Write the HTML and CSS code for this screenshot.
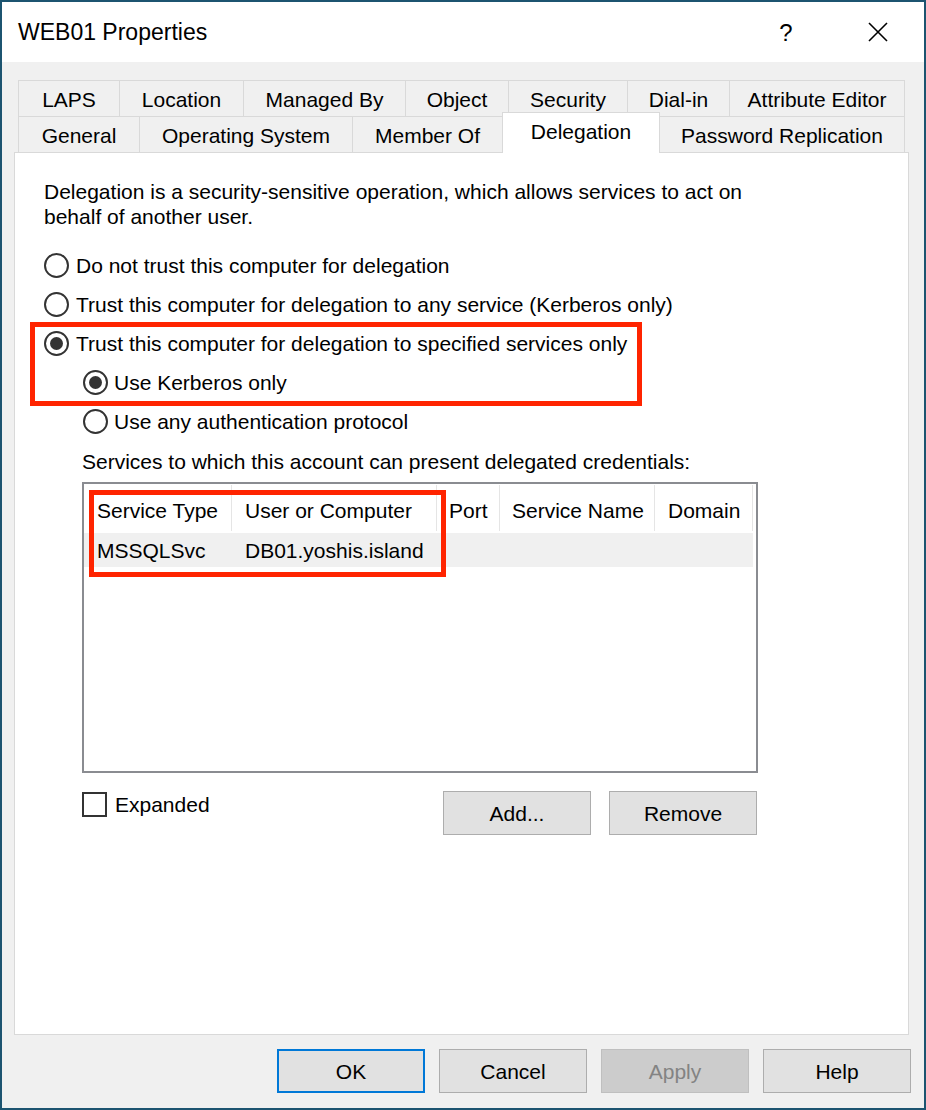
FILE: index.html
```html
<!DOCTYPE html>
<html>
<head>
<meta charset="utf-8">
<title>WEB01 Properties</title>
<link rel="stylesheet" href="styles.css">
</head>
<body>
<div class="window">
  <div class="titlebar">
    <span class="title">WEB01 Properties</span>
    <span class="help">?</span>
    <svg class="close" viewBox="0 0 20 20"><path d="M1 1 L19 19 M19 1 L1 19" stroke="#000" stroke-width="1.6" fill="none"/></svg>
  </div>
  <div class="body">
    <div class="tabs">
      <div class="tabrow back">
        <div class="tab t-laps">LAPS</div>
        <div class="tab t-location">Location</div>
        <div class="tab t-managed">Managed By</div>
        <div class="tab t-object">Object</div>
        <div class="tab t-security">Security</div>
        <div class="tab t-dialin">Dial-in</div>
        <div class="tab t-attr">Attribute Editor</div>
      </div>
      <div class="tabrow front">
        <div class="tab t-general">General</div>
        <div class="tab t-os">Operating System</div>
        <div class="tab t-member">Member Of</div>
        <div class="tab t-deleg active">Delegation</div>
        <div class="tab t-pwd">Password Replication</div>
      </div>
    </div>
    <div class="panel">
      <p class="intro">Delegation is a security-sensitive operation, which allows services to act on<br>behalf of another user.</p>
      <div class="options">
        <div class="radio"><span class="rb"></span><span>Do not trust this computer for delegation</span></div>
        <div class="radio"><span class="rb"></span><span>Trust this computer for delegation to any service (Kerberos only)</span></div>
        <div class="radio"><span class="rb checked"></span><span>Trust this computer for delegation to specified services only</span></div>
        <div class="radio sub"><span class="rb checked"></span><span>Use Kerberos only</span></div>
        <div class="radio sub"><span class="rb"></span><span>Use any authentication protocol</span></div>
      </div>
      <div class="caption">Services to which this account can present delegated credentials:</div>
      <div class="listview">
        <div class="lv-header">
          <div class="cell c-type">Service Type</div>
          <div class="cell c-user">User or Computer</div>
          <div class="cell c-port">Port</div>
          <div class="cell c-name">Service Name</div>
          <div class="cell c-domain">Domain</div>
        </div>
        <div class="lv-row">
          <div class="cell c-type">MSSQLSvc</div>
          <div class="cell c-user">DB01.yoshis.island</div>
          <div class="cell c-port"></div>
          <div class="cell c-name"></div>
          <div class="cell c-domain"></div>
        </div>
        <div class="hl hl-table"></div>
      </div>
      <div class="lv-actions">
        <div class="check"><span class="cb"></span><span>Expanded</span></div>
        <div class="lv-buttons">
          <div class="btn">Add...</div>
          <div class="btn">Remove</div>
        </div>
      </div>
      <div class="hl hl-radio"></div>
    </div>
    <div class="footer">
      <div class="btn default">OK</div>
      <div class="btn">Cancel</div>
      <div class="btn disabled">Apply</div>
      <div class="btn">Help</div>
    </div>
  </div>
</div>
</body>
</html>
```
FILE: styles.css
```css
* { box-sizing: border-box; margin: 0; padding: 0; }
html, body { width: 926px; height: 1110px; overflow: hidden; background: #f0f0f0; }
body {
  font-family: "Liberation Sans", Arial, sans-serif;
  font-size: 21px;
  line-height: 25px;
  color: #000;
}
.window {
  width: 926px;
  height: 1110px;
  border: 2px solid #1c5470;
  background: #f0f0f0;
  display: flex;
  flex-direction: column;
}
.titlebar {
  flex: none;
  height: 60px;
  background: #fff;
  display: flex;
  align-items: center;
}
.title { padding-left: 16px; font-size: 23px; }
.help {
  margin-left: auto;
  width: 40px;
  text-align: center;
  font-size: 24px;
  margin-right: 62px;
}
.close { width: 20px; height: 20px; margin-right: 36px; display: block; }

.body {
  flex: 1;
  padding: 18px 15px 0 12px;
  display: flex;
  flex-direction: column;
}
.tabs { margin: 0 4px; }
.tabrow { display: flex; height: 36px; align-items: flex-start; }
.tab {
  flex: none;
  height: 36px;
  border-top: 1px solid #d9d9d9;
  border-right: 1px solid #d9d9d9;
  text-align: center;
  padding-top: 6px;
  white-space: nowrap;
}
.tab:first-child { border-left: 1px solid #d9d9d9; }
.t-laps { width: 102px; }
.t-location { width: 124px; }
.t-managed { width: 162px; }
.t-object { width: 103px; }
.t-security { width: 119px; }
.t-dialin { width: 102px; }
.t-attr { width: 175px; }
.t-general { width: 122px; }
.t-os { width: 213px; }
.t-member { width: 150px; }
.t-deleg { width: 157px; }
.t-pwd { width: 245px; }
.tab.active {
  background: #fff;
  border-left: 1px solid #d9d9d9;
  margin-left: -1px;
  width: 158px;
  height: 41px;
  margin-top: -4px;
  position: relative;
  z-index: 2;
}

.panel {
  flex: none;
  height: 883px;
  background: #fff;
  border: 1px solid #d9d9d9;
  position: relative;
  padding: 26px 0 0 29px;
}
.options { margin-top: 17px; }
.radio { height: 39px; display: flex; align-items: center; }
.radio.sub { padding-left: 39px; }
.rb {
  flex: none;
  width: 25px;
  height: 25px;
  border: 2px solid #333;
  border-radius: 50%;
  margin-right: 7px;
  display: flex;
  align-items: center;
  justify-content: center;
}
.rb.checked::after {
  content: "";
  width: 13px;
  height: 13px;
  border-radius: 50%;
  background: #333;
}
.radio.sub .rb { margin-right: 6px; }

.caption { margin-top: 8px; padding-left: 38px; }
.listview {
  margin-top: 8px;
  margin-left: 38px;
  width: 676px;
  height: 291px;
  border: 2px solid #8a8c91;
  position: relative;
}
.lv-header { display: flex; height: 49px; }
.lv-header .cell {
  padding-top: 13px;
  border-right: 1px solid #e5e5e5;
  margin-top: 1px;
  height: 46px;
}
.lv-row { display: flex; height: 34px; width: 669px; background: #f0f0f0; }
.lv-row .cell { padding-top: 5px; }
.cell { flex: none; padding-left: 13px; white-space: nowrap; }
.c-type { width: 148px; }
.c-user { width: 205px; }
.c-port { width: 63px; padding-left: 12px; }
.c-name { width: 155px; padding-left: 12px; }
.c-domain { width: 98px; }

.lv-actions {
  margin-top: 18px;
  margin-left: 38px;
  width: 675px;
  display: flex;
  justify-content: space-between;
  align-items: flex-start;
}
.check { display: flex; align-items: center; margin-top: 1px; }
.cb {
  width: 25px;
  height: 25px;
  border: 2px solid #333;
  margin-right: 8px;
  flex: none;
}
.lv-buttons { display: flex; gap: 18px; }
.btn {
  width: 148px;
  height: 44px;
  background: #e1e1e1;
  border: 1px solid #adadad;
  display: flex;
  align-items: center;
  justify-content: center;
}
.btn.default { border: 2px solid #0078d7; }
.btn.disabled { background: #cccccc; border-color: #bfbfbf; color: #838383; }

.footer {
  margin-top: 14px;
  margin-right: -2px;
  display: flex;
  justify-content: flex-end;
  gap: 14px;
}

.hl {
  position: absolute;
  border: 5px solid #ff2400;
  pointer-events: none;
}
.hl-radio { left: 15px; top: 169px; width: 612px; height: 84px; }
.hl-table { left: 5px; top: 6px; width: 357px; height: 87px; }
```
